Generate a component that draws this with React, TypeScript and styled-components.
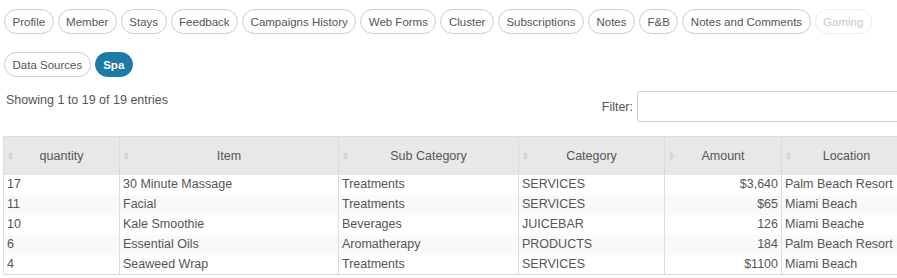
import React from "react";
import styled, { createGlobalStyle } from "styled-components";

const GlobalStyle = createGlobalStyle`
  html, body {
    margin: 0;
    padding: 0;
    background: #fff;
    overflow: hidden;
  }
  body {
    font-family: "Liberation Sans", Arial, sans-serif;
    color: #555;
  }
`;

const tabs = [
  "Profile",
  "Member",
  "Stays",
  "Feedback",
  "Campaigns History",
  "Web Forms",
  "Cluster",
  "Subscriptions",
  "Notes",
  "F&B",
  "Notes and Comments",
];

type Row = {
  quantity: string;
  item: string;
  sub: string;
  category: string;
  amount: string;
  location: string;
};

const rows: Row[] = [
  { quantity: "17", item: "30 Minute Massage", sub: "Treatments", category: "SERVICES", amount: "$3,640", location: "Palm Beach Resort" },
  { quantity: "11", item: "Facial", sub: "Treatments", category: "SERVICES", amount: "$65", location: "Miami Beach" },
  { quantity: "10", item: "Kale Smoothie", sub: "Beverages", category: "JUICEBAR", amount: "126", location: "Miami Beache" },
  { quantity: "6", item: "Essential Oils", sub: "Aromatherapy", category: "PRODUCTS", amount: "184", location: "Palm Beach Resort" },
  { quantity: "4", item: "Seaweed Wrap", sub: "Treatments", category: "SERVICES", amount: "$1100", location: "Miami Beach" },
];

const columns = [
  { label: "quantity", width: 116 },
  { label: "Item", width: 219 },
  { label: "Sub Category", width: 180 },
  { label: "Category", width: 146 },
  { label: "Amount", width: 117 },
  { label: "Location", width: 130 },
];

const SortIcon = () => (
  <SortSvg width="5" height="8" viewBox="0 0 5 8">
    <path d="M2.5 0 L5 3.6 L0 3.6 Z M0 4.4 L5 4.4 L2.5 8 Z" fill="#d2d2d2" />
  </SortSvg>
);

const App: React.FC = () => {
  return (
    <Page>
      <GlobalStyle />
      <PillRow>
        {tabs.map((t) => (
          <Pill key={t}>{t}</Pill>
        ))}
        <Pill disabled>Gaming</Pill>
      </PillRow>
      <PillRow>
        <Pill>Data Sources</Pill>
        <Pill active>Spa</Pill>
      </PillRow>
      <InfoBar>
        <Info>Showing 1 to 19 of 19 entries</Info>
        <FilterLabel>
          Filter:
          <FilterInput type="text" />
        </FilterLabel>
      </InfoBar>
      <Table>
        <colgroup>
          {columns.map((c) => (
            <col key={c.label} style={{ width: c.width }} />
          ))}
        </colgroup>
        <thead>
          <tr>
            {columns.map((c) => (
              <Th key={c.label}>
                <SortIcon />
                {c.label}
              </Th>
            ))}
          </tr>
        </thead>
        <tbody>
          {rows.map((r, i) => (
            <Tr key={i} striped={i % 2 === 1}>
              <Td>{r.quantity}</Td>
              <Td>{r.item}</Td>
              <Td>{r.sub}</Td>
              <Td>{r.category}</Td>
              <Td align="right">{r.amount}</Td>
              <Td>{r.location}</Td>
            </Tr>
          ))}
        </tbody>
      </Table>
    </Page>
  );
};

export default App;

const Page = styled.div`
  width: 897px;
  height: 278px;
  overflow: hidden;
  padding: 9px 0 0 3px;
  box-sizing: border-box;
`;

const PillRow = styled.div`
  display: flex;
  gap: 4px;
  padding-left: 1px;
  margin-bottom: 18px;
  white-space: nowrap;
`;

const Pill = styled.button<{ active?: boolean; disabled?: boolean }>`
  font-family: "Liberation Sans", Arial, sans-serif;
  font-size: 11.5px;
  height: 25px;
  padding: 0 7.5px;
  border-radius: 13px;
  border: 1px solid ${(p) => (p.active ? "#1b7aa8" : p.disabled ? "#ececec" : "#cccccc")};
  background: ${(p) => (p.active ? "#1b7aa8" : "#fff")};
  color: ${(p) => (p.active ? "#fff" : p.disabled ? "#c8c8c8" : "#555")};
  font-weight: ${(p) => (p.active ? "bold" : "normal")};
  cursor: ${(p) => (p.disabled ? "default" : "pointer")};
  flex-shrink: 0;
`;

const InfoBar = styled.div`
  display: flex;
  justify-content: space-between;
  align-items: flex-start;
  margin-top: -10px;
  height: 51px;
`;

const Info = styled.div`
  font-size: 12.5px;
  padding: 8px 0 0 3px;
  color: #555;
`;

const FilterLabel = styled.label`
  display: flex;
  align-items: center;
  gap: 4px;
  font-size: 12.5px;
  color: #555;
  margin-right: -80px;
  margin-top: 6px;
`;

const FilterInput = styled.input`
  width: 340px;
  height: 31px;
  box-sizing: border-box;
  border: 1px solid #ccc;
  border-radius: 3px;
`;

const Table = styled.table`
  border-collapse: collapse;
  table-layout: fixed;
  width: 908px;
  font-size: 12.5px;
  color: #555;
  border-left: 1px solid #ddd;
  border-bottom: 1px solid #ddd;
`;

const Th = styled.th`
  position: relative;
  height: 38px;
  box-sizing: border-box;
  background: #e8e8e9;
  border: 1px solid #dcdcdc;
  border-bottom: none;
  font-weight: normal;
  color: #555;
  text-align: center;
  padding: 0 6px;
`;

const SortSvg = styled.svg`
  position: absolute;
  left: 4px;
  top: 15px;
`;

const Tr = styled.tr<{ striped: boolean }>`
  background: ${(p) => (p.striped ? "#f9f9f9" : "#fff")};
`;

const Td = styled.td<{ align?: "left" | "right" }>`
  height: 20px;
  padding: 0 3px;
  box-sizing: border-box;
  line-height: 19px;
  text-align: ${(p) => p.align ?? "left"};
  border-left: 1px solid #ddd;
  white-space: nowrap;
  overflow: hidden;
`;
